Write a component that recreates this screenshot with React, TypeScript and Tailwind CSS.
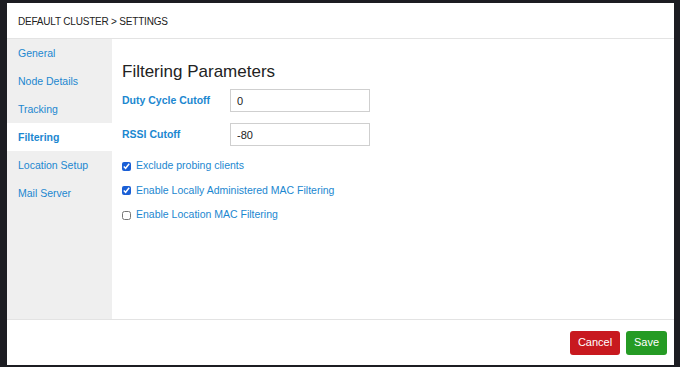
import { useState } from 'react';

const navItems = ['General', 'Node Details', 'Tracking', 'Filtering', 'Location Setup', 'Mail Server'];

const checks = [
  { id: 'probing', label: 'Exclude probing clients', on: true },
  { id: 'local', label: 'Enable Locally Administered MAC Filtering', on: true },
  { id: 'location', label: 'Enable Location MAC Filtering', on: false },
];

export default function App() {
  const [active] = useState('Filtering');
  const [values, setValues] = useState(checks.map((c) => c.on));

  return (
    <div
      className="flex h-[367px] w-[680px] flex-col overflow-hidden bg-[#1c1d22] pt-[3px] pl-[7px]"
      style={{ fontFamily: '"Liberation Sans", Arial, sans-serif' }}
    >
      <div className="flex h-[362px] w-[667px] flex-col bg-white">
        <div className="flex h-[36px] shrink-0 items-center border-b border-[#e3e3e3] px-[11px] pt-px text-[10px] tracking-[-0.2px] text-[#222]">
          DEFAULT CLUSTER &gt; SETTINGS
        </div>

        <div className="flex min-h-0 flex-1">
          <nav className="w-[105px] shrink-0 bg-[#efefef]">
            {navItems.map((item) => (
              <div
                key={item}
                className={
                  item === active
                    ? 'flex h-[28px] items-center bg-white px-[11px] pt-px text-[10.5px] font-bold text-[#1b87d0]'
                    : 'flex h-[28px] items-center px-[11px] pt-px text-[10.5px] text-[#1b87d0]'
                }
              >
                {item}
              </div>
            ))}
          </nav>

          <div className="flex-1 pt-[22px] pl-[10px]">
            <h2 className="text-[17px] leading-[22px] text-[#222]">Filtering Parameters</h2>

            <div className="mt-[6px] flex items-center">
              <label className="w-[108px] text-[10.5px] font-bold text-[#1b87d0]">Duty Cycle Cutoff</label>
              <input
                defaultValue="0"
                className="h-[23px] w-[140px] border border-[#cfcfcf] px-[6px] text-[11px] text-[#222] outline-none"
              />
            </div>
            <div className="mt-[11px] flex items-center">
              <label className="w-[108px] text-[10.5px] font-bold text-[#1b87d0]">RSSI Cutoff</label>
              <input
                defaultValue="-80"
                className="h-[23px] w-[140px] border border-[#cfcfcf] px-[6px] text-[11px] text-[#222] outline-none"
              />
            </div>

            <div className="mt-[8px] flex flex-col">
              {checks.map((c, i) => (
                <label key={c.id} className="flex h-[24.5px] items-center gap-[5px] text-[10.5px] text-[#1b87d0]">
                  <input
                    type="checkbox"
                    checked={values[i]}
                    onChange={() => setValues((v) => v.map((x, j) => (j === i ? !x : x)))}
                    className="m-0 h-[9px] w-[9px] accent-[#1a5fd6]"
                  />
                  {c.label}
                </label>
              ))}
            </div>
          </div>
        </div>

        <div className="flex h-[46px] shrink-0 items-center justify-end gap-[6px] border-t border-[#e3e3e3] pr-[7px]">
          <button type="button" className="h-[24px] w-[50px] rounded-[3px] bg-[#c8191f] text-[11px] text-white">
            Cancel
          </button>
          <button type="button" className="h-[24px] w-[41px] rounded-[3px] bg-[#259b24] text-[11px] text-white">
            Save
          </button>
        </div>
      </div>
    </div>
  );
}
